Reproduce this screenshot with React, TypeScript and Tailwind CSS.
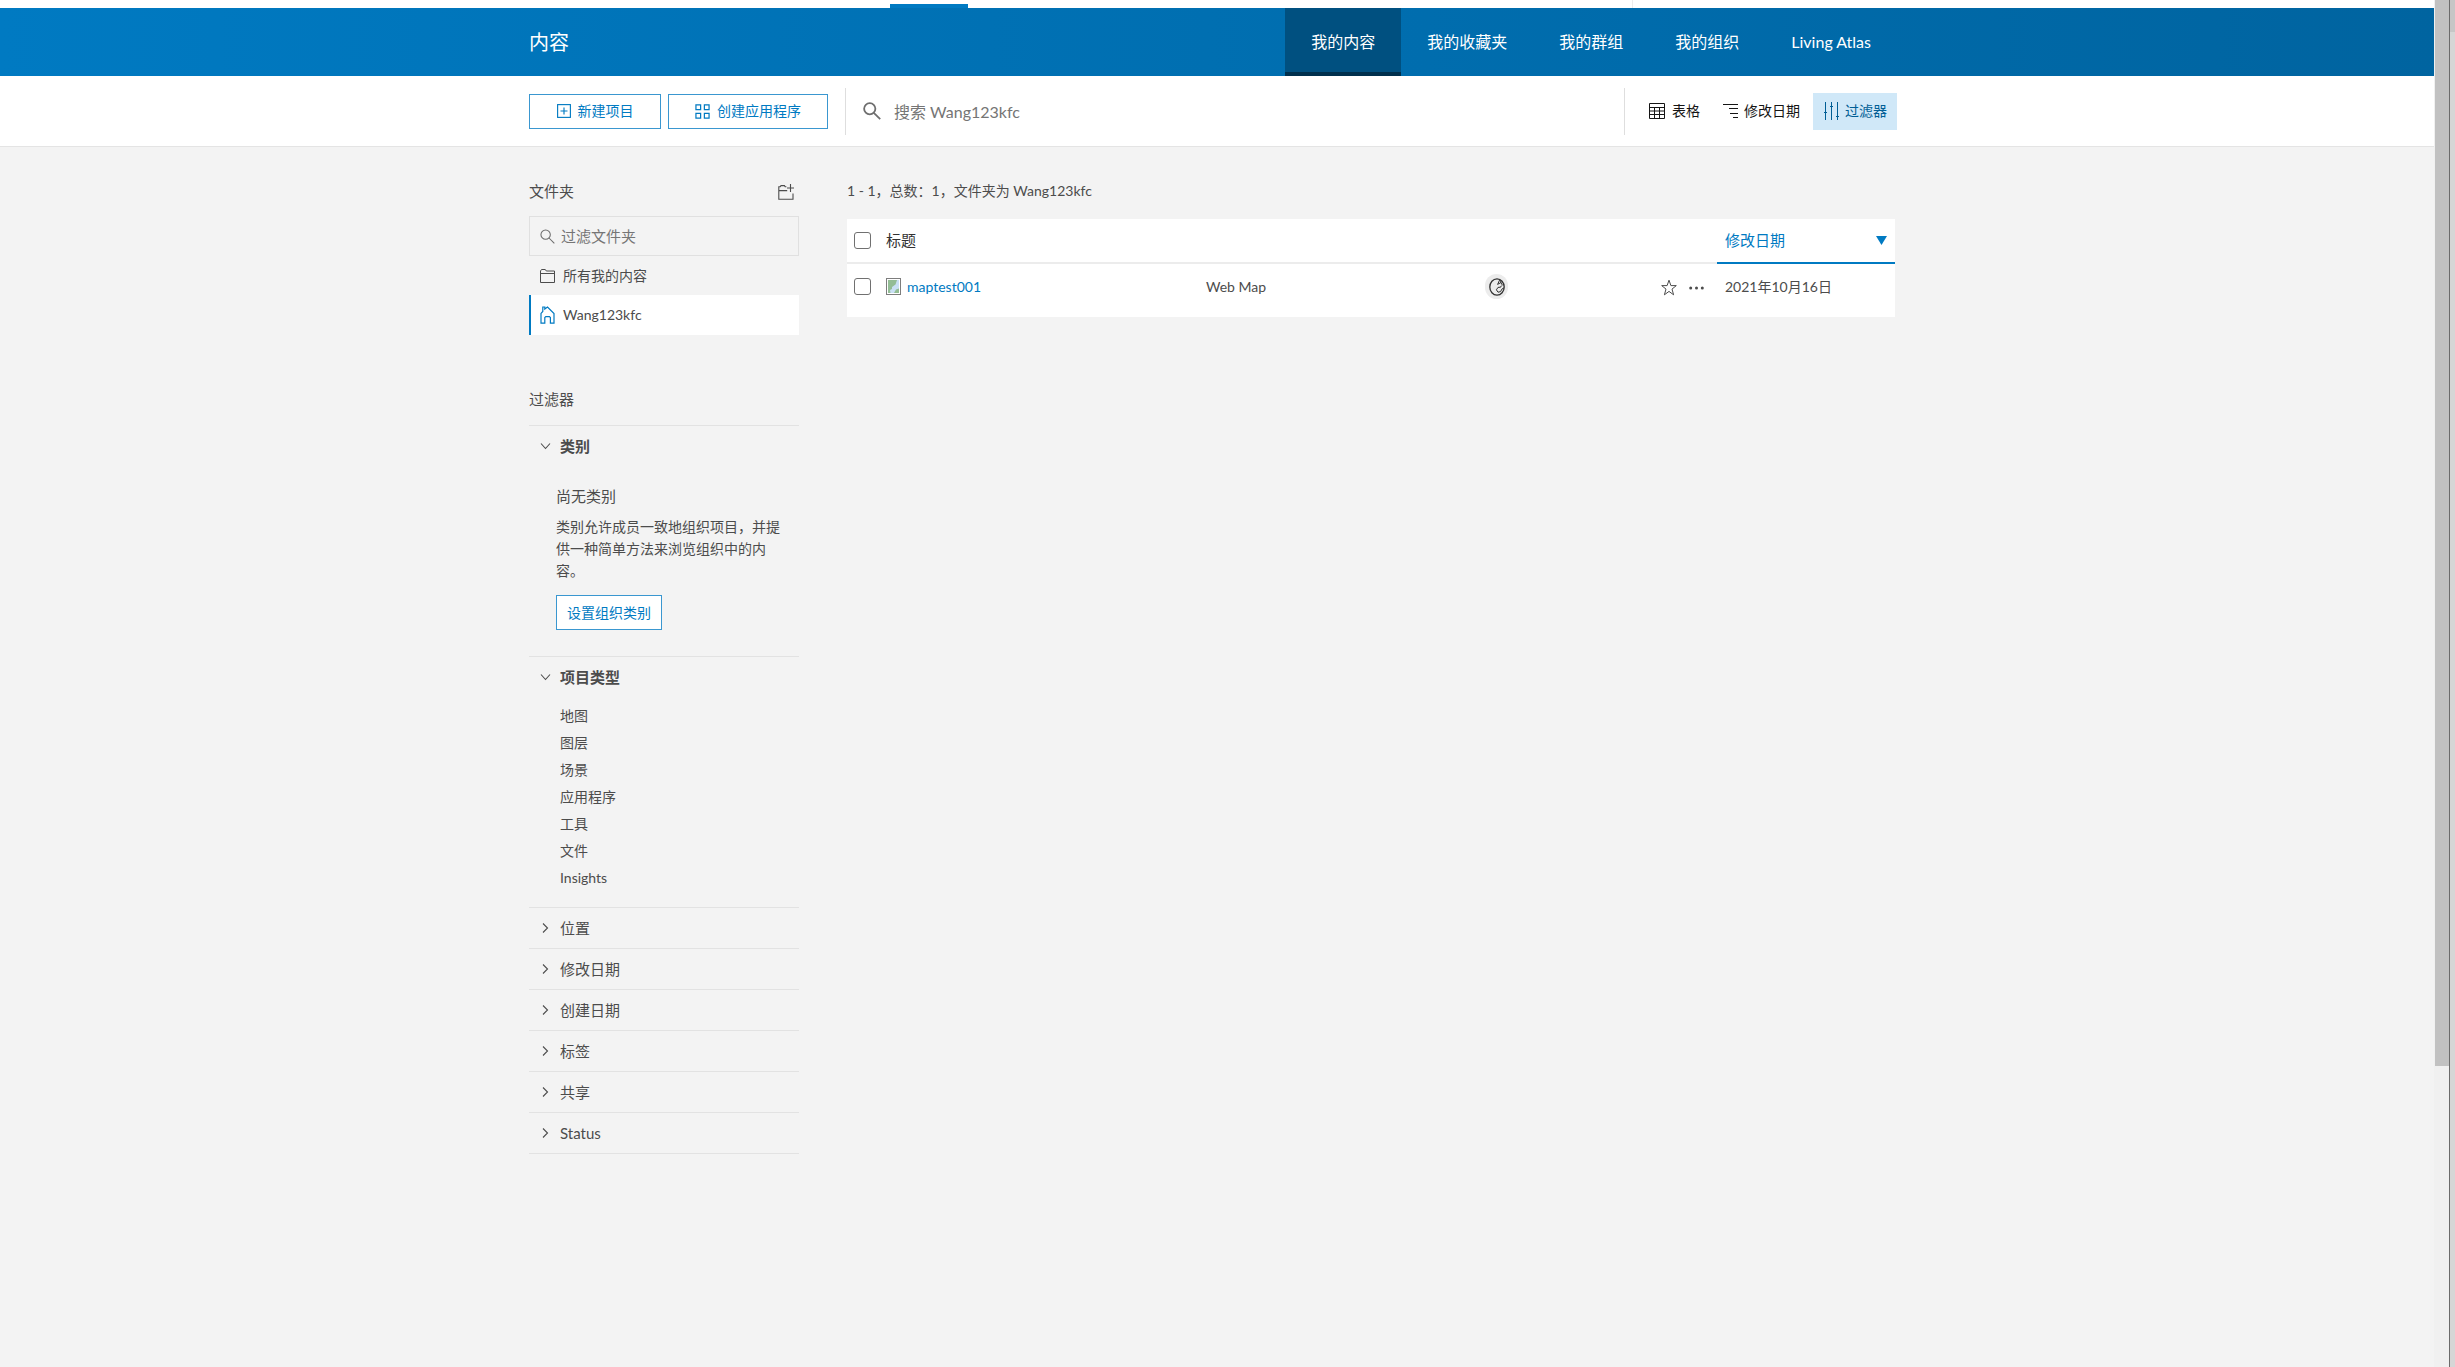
import type { ReactNode } from "react";

const navItems = ["我的内容", "我的收藏夹", "我的群组", "我的组织", "Living Atlas"];
const itemTypes = ["地图", "图层", "场景", "应用程序", "工具", "文件", "Insights"];
const closedFilters = ["位置", "修改日期", "创建日期", "标签", "共享", "Status"];

function Icon({ className, children, box = "0 0 16 16" }: { className: string; children: ReactNode; box?: string }) {
  return (
    <svg viewBox={box} className={`shrink-0 ${className}`} fill="none" stroke="currentColor" aria-hidden="true">
      {children}
    </svg>
  );
}

function SearchIcon({ className, stroke }: { className: string; stroke: number }) {
  return (
    <Icon className={className}>
      <circle cx="6" cy="6" r="5" strokeWidth={stroke} />
      <path d="M9.6 9.6 15.3 15.3" strokeWidth={stroke} />
    </Icon>
  );
}

function Header() {
  return (
    <header className="bg-linear-to-r from-[#007ac2] to-[#0064a0] pr-[8px] text-white">
      <div className="mx-auto flex h-[68px] max-w-[1368px] items-center justify-between">
        <h1 className="text-xl">内容</h1>
        <nav className="flex h-full">
          {navItems.map((item, i) => (
            <a
              key={item}
              href="#"
              aria-current={i === 0 ? "page" : undefined}
              className={
                i === 0
                  ? "flex items-center border-y-4 border-t-transparent border-b-[#00304d] bg-[#005080] bg-clip-border px-[26px] text-base"
                  : "flex items-center px-[26px] text-base"
              }
            >
              {item}
            </a>
          ))}
        </nav>
      </div>
    </header>
  );
}

function Toolbar() {
  return (
    <div className="border-b border-[#e4e4e4] bg-white pr-[8px]">
      <div className="mx-auto flex h-[70px] max-w-[1368px] items-center">
        <button className="flex h-[35px] w-[132px] items-center justify-center gap-[7px] border border-[#3a97d0] text-sm text-[#007ac2]">
          <Icon className="size-[14px]">
            <rect x="0.7" y="0.7" width="14.6" height="14.6" strokeWidth="1.3" />
            <path d="M8 4v8M4 8h8" strokeWidth="1.3" />
          </Icon>
          新建项目
        </button>
        <button className="ml-[7px] flex h-[35px] w-[160px] items-center justify-center gap-[7px] border border-[#3a97d0] text-sm text-[#007ac2]">
          <Icon className="size-[15px]">
            <path d="M1 1h5v5H1zM10 1h5v5h-5zM1 10h5v5H1zM10 10h5v5h-5z" strokeWidth="1.3" />
          </Icon>
          创建应用程序
        </button>
        <div className="ml-[17px] flex h-[47px] flex-1 items-center border-x border-[#dedede] pl-[17px]">
          <span className="text-[#6e6e6e]">
            <SearchIcon className="size-[18px]" stroke={1.6} />
          </span>
          <input
            type="text"
            aria-label="搜索 Wang123kfc"
            placeholder="搜索 Wang123kfc"
            className="ml-[13px] min-w-0 flex-1 bg-transparent pt-0.5 text-base outline-none placeholder:text-[#757575]"
          />
        </div>
        <button className="ml-[24px] flex items-center gap-[7px] text-sm text-[#151515]">
          <Icon className="size-[16px]">
            <path d="M0.5 0.5h15v15h-15zM0.5 4.5h15M0.5 8h15M0.5 11.5h15M5.5 4.5v11M10.5 4.5v11" strokeWidth="1" />
          </Icon>
          表格
        </button>
        <button className="ml-[23px] flex items-center gap-[5px] text-sm text-[#151515]">
          <Icon className="size-[16px]">
            <path d="M0 1.5h15M6 5.5h9M7 10.5h8M10 14.5h5" strokeWidth="1" />
          </Icon>
          修改日期
        </button>
        <button className="ml-[13px] flex h-[37px] w-[84px] items-center justify-center gap-[6px] bg-[#d0e8f8] text-sm text-[#005e95]">
          <Icon className="h-[18px] w-[16px]" box="0 0 16 18">
            <path d="M2.5 0v18M8.5 0v18M14.5 0v18M1 10.5h3M7 4.5h3M13 14.5h3" strokeWidth="1" />
          </Icon>
          过滤器
        </button>
      </div>
    </div>
  );
}

function Folders() {
  return (
    <section>
      <div className="flex h-[37px] items-start justify-between pr-[5px]">
        <h2 className="text-[15px] leading-6">文件夹</h2>
        <button aria-label="新建文件夹" className="pt-[5px]">
          <Icon className="block size-[16px]">
            <path d="M15 9.5v5.8H0.8V2.8h1.4l.8-1.2h3.4l.8 1.2h1.2M0.8 6.6h8.4M12.5 0v8M9 4h7" strokeWidth="1.1" />
          </Icon>
        </button>
      </div>
      <label className="flex h-[40px] items-center border border-[#e0e0e0] pl-[10px] text-[#6a6a6a]">
        <SearchIcon className="size-[15px]" stroke={1.1} />
        <input
          type="text"
          aria-label="过滤文件夹"
          placeholder="过滤文件夹"
          className="ml-[6px] min-w-0 flex-1 bg-transparent text-[15px] outline-none placeholder:text-[#757575]"
        />
      </label>
      <button className="flex h-[39px] w-full items-center gap-[8px] pl-[11px] text-sm">
        <Icon className="h-[14px] w-[15px]" box="0 0 15 14">
          <path d="M0.5 13.5V2l1-1.5h3.8l1 1.5h8.2v11.5zM0.5 4.5h14" strokeWidth="1" />
        </Icon>
        所有我的内容
      </button>
      <button className="flex h-[40px] w-full items-center gap-[8px] border-l-2 border-[#007ac2] bg-white pl-[9px] text-sm">
        <span className="text-[#007ac2]">
          <Icon className="block h-[18px] w-[15px]" box="0 0 15 18">
            <path d="M1 17.2V7.4L2.8 5.4V1h2v2L7.5 1l6.5 6.6v9.6h-3.6v-5.6l-1-1H5.8l-1 1v5.6z" strokeWidth="1.2" />
          </Icon>
        </span>
        Wang123kfc
      </button>
    </section>
  );
}

function Chevron({ open }: { open: boolean }) {
  return (
    <Icon className="size-[12px]" box="0 0 12 12">
      <path d={open ? "M1 3.5 5.5 8.5 10 3.5" : "M3 1.5 7.5 6 3 10.5"} strokeWidth="1.1" />
    </Icon>
  );
}

function FilterHeading({ open, children }: { open: boolean; children: ReactNode }) {
  return (
    <button
      aria-expanded={open}
      className={
        open
          ? "flex h-[40px] w-full items-center gap-[8px] pl-[11px] text-[15px] font-bold"
          : "flex h-[40px] w-full items-center gap-[8px] pl-[11px] text-[15px]"
      }
    >
      <Chevron open={open} />
      {children}
    </button>
  );
}

function Filters() {
  return (
    <section className="mt-[52px]">
      <h2 className="pb-[14px] text-[15px] leading-6">过滤器</h2>
      <div className="h-[231px] border-t border-[#e2e2e2]">
        <FilterHeading open>类别</FilterHeading>
        <div className="pt-[18px] pl-[27px]">
          <h3 className="text-[15px] leading-6">尚无类别</h3>
          <p className="mt-[8px] w-[230px] text-sm leading-[22px]">
            类别允许成员一致地组织项目，并提供一种简单方法来浏览组织中的内容。
          </p>
          <button className="mt-[13px] flex h-[35px] items-center border border-[#3a97d0] bg-white px-[10px] text-sm text-[#007ac2]">
            设置组织类别
          </button>
        </div>
      </div>
      <div className="h-[251px] border-t border-[#e2e2e2]">
        <FilterHeading open>项目类型</FilterHeading>
        <ul className="pt-[5px] pl-[31px]">
          {itemTypes.map((type) => (
            <li key={type}>
              <a href="#" className="block text-sm leading-[27px]">
                {type}
              </a>
            </li>
          ))}
        </ul>
      </div>
      {closedFilters.map((name) => (
        <div key={name} className="border-t border-[#e2e2e2] last:border-b">
          <FilterHeading open={false}>{name}</FilterHeading>
        </div>
      ))}
    </section>
  );
}

const checkbox = "block size-[17px] appearance-none rounded-[3px] border border-[#707070] bg-white";

function Items() {
  return (
    <main className="min-w-0 flex-1">
      <p className="mb-[16px] text-sm leading-6">1 - 1，总数：1，文件夹为 Wang123kfc</p>
      <table className="w-full table-fixed border-collapse text-left">
        <colgroup>
          <col className="w-[39px]" />
          <col />
          <col className="w-[279px]" />
          <col className="w-[176px]" />
          <col className="w-[56px]" />
          <col className="w-[178px]" />
        </colgroup>
        <thead>
          <tr className="h-[44px] bg-white text-[15px]">
            <th className="border-b-2 border-[#ececec] pl-[7px]">
              <input type="checkbox" aria-label="全选" className={checkbox} />
            </th>
            <th className="border-b-2 border-[#ececec] font-normal text-[#323232]">标题</th>
            <th className="border-b-2 border-[#ececec]" />
            <th className="border-b-2 border-[#ececec]" />
            <th className="border-b-2 border-[#ececec]" />
            <th className="border-b-2 border-[#007ac2] px-[8px] font-normal text-[#007ac2]" aria-sort="descending">
              <button className="flex w-full items-center justify-between">
                修改日期
                <svg viewBox="0 0 11 9" className="h-[9px] w-[11px]" fill="currentColor" aria-hidden="true">
                  <path d="M0 0h11L5.5 9z" />
                </svg>
              </button>
            </th>
          </tr>
        </thead>
        <tbody>
          <tr className="h-[54px] bg-white text-sm">
            <td className="pb-[8px] pl-[7px]">
              <input type="checkbox" aria-label="选择 maptest001" className={checkbox} />
            </td>
            <td className="pb-[8px]">
              <a href="#" className="flex items-center gap-[6px] text-[#007ac2]">
                <svg viewBox="0 0 15 17" className="h-[17px] w-[15px]" aria-hidden="true">
                  <rect x="0.5" y="0.5" width="14" height="16" fill="#fff" stroke="#7d7d7d" />
                  <rect x="2" y="2" width="11" height="13" fill="#c9e0f5" />
                  <path d="M2 2h9l-1.5 4.5L6 9v2l-2 1 0.5 3H2z" fill="#93bd95" />
                  <path d="M8 15l2-3.5 3-1V15z" fill="#93bd95" />
                </svg>
                maptest001
              </a>
            </td>
            <td className="pb-[8px]">Web Map</td>
            <td className="pb-[8px]">
              <span role="img" aria-label="所有人" className="flex h-[25px] w-[23px] items-center justify-center rounded-full bg-[#ececec] text-[#323232]">
                <Icon className="h-[18px] w-[16px]" box="0 0 16 18">
                  <ellipse cx="8" cy="9" rx="7.2" ry="8.2" strokeWidth="1.3" />
                  <path d="M10.8 1.6 8.6 6.4 11.8 4.6 13.6 7.4M11.6 2.4 12 5M9 9.4 7.4 11.8 9 14.2 11.6 13.6 12.8 11.2 15 9.8M9 9.4 11.6 9.2 12.4 7.6" strokeWidth="1" />
                </Icon>
              </span>
            </td>
            <td className="pb-[6px]">
              <div className="flex items-center gap-[12px]">
                <button aria-label="添加到收藏夹">
                  <Icon className="block h-[17px] w-[16px]" box="0 0 16 17">
                    <path d="M8 1.2 9.9 6.6h5.4l-4.3 3.5 1.6 5.7L8 12.4l-4.6 3.4L5 10.1.7 6.6h5.4z" strokeWidth="1" />
                  </Icon>
                </button>
                <button aria-label="更多选项">
                  <svg viewBox="0 0 15 4" className="block h-[4px] w-[15px]" fill="currentColor" aria-hidden="true">
                    <circle cx="1.7" cy="2" r="1.5" />
                    <circle cx="7.5" cy="2" r="1.5" />
                    <circle cx="13.3" cy="2" r="1.5" />
                  </svg>
                </button>
              </div>
            </td>
            <td className="pb-[8px] pl-[8px]">2021年10月16日</td>
          </tr>
        </tbody>
      </table>
    </main>
  );
}

export default function App() {
  return (
    <div className="flex min-h-screen bg-[#f3f3f3] font-['Lato','Noto_Sans_CJK_SC',sans-serif] font-normal text-[#4c4c4c]">
      <div className="min-w-0 flex-1">
        <div className="bg-white pr-[8px]">
          <div className="mx-auto flex h-[8px] max-w-[1368px] items-end">
            <div className="ml-[361px] h-[4px] w-[78px] bg-[#007ac2]" />
            <div className="ml-[664px] h-full w-px bg-[#ececec]" />
          </div>
        </div>
        <Header />
        <Toolbar />
        <div className="pr-[8px]">
          <div className="mx-auto flex max-w-[1368px] gap-[48px] pt-[32px] pr-[2px]">
            <aside className="w-[270px] shrink-0">
              <Folders />
              <Filters />
            </aside>
            <Items />
          </div>
        </div>
      </div>
      <div className="flex w-[16px] border-r border-[#6b6b6b] bg-[#f0f0f0] pl-px">
        <div className="h-[78vh] w-[14px] bg-[#c1c1c1]" />
      </div>
      <div className="w-[5px] bg-[#d6d6d6]">
        <div className="h-[32px] bg-[#c6c6c6]" />
      </div>
    </div>
  );
}
